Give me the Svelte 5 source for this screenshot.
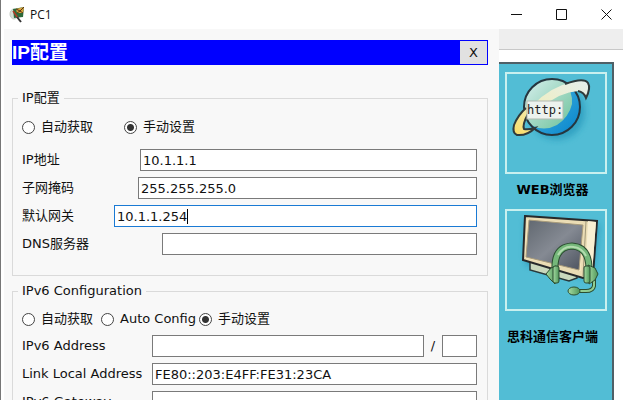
<script lang="ts">
  let ipMode = $state('static');
  let ipv6Mode = $state('static');

  let address = $state('10.1.1.1');
  let mask = $state('255.255.255.0');
  let gateway = $state('10.1.1.254');
  let dns = $state('');

  let v6Address = $state('');
  let v6Prefix = $state('');
  let linkLocal = $state('FE80::203:E4FF:FE31:23CA');
  let v6Gateway = $state('');

  // digits are one ch wide, dots are half of that
  const caret = $derived([...gateway].reduce((n, c) => n + (c === '.' ? 0.5 : 1), 0));
</script>

<div class="window">
  <header class="titlebar">
    <svg class="app-icon" width="18" height="18" viewBox="0 0 18 18" aria-hidden="true">
      <ellipse cx="5" cy="8" rx="4" ry="5" fill="#d5dcd3" stroke="#c3cac1" />
      <path d="M4 3 L15 1 L14 11 L5 12 Z" fill="#2c6a3b" />
      <path d="M7 3 L15 1 L14 7 L8 7 Z" fill="#d9a53c" />
      <path d="M7 3 L11 5 L15 1 M8 7 L11 5 L14 7" stroke="#5b3215" fill="none" />
      <path d="M4 5 L9 12" stroke="#b23a24" stroke-width="1.5" />
      <path d="M8 11 L12 16" stroke="#333" stroke-width="2" />
    </svg>
    <span class="title">PC1</span>
    <div class="controls">
      <button aria-label="Minimize">
        <svg width="11" height="11" viewBox="0 0 11 11"><path d="M0 5.5H11" /></svg>
      </button>
      <button aria-label="Maximize">
        <svg width="11" height="11" viewBox="0 0 11 11"><path d="M.5 .5H10.5V10.5H.5Z" /></svg>
      </button>
      <button aria-label="Close">
        <svg width="11" height="11" viewBox="0 0 11 11"><path d="M.5 .5L10.5 10.5M10.5 .5L.5 10.5" /></svg>
      </button>
    </div>
  </header>

  <div class="body">
    <main class="config">
      <div class="bar">
        <h1>IP配置</h1>
        <button>X</button>
      </div>

      <fieldset>
        <legend>IP配置</legend>
        <div class="modes">
          <label><input type="radio" value="dhcp" bind:group={ipMode} />自动获取</label>
          <label><input type="radio" value="static" bind:group={ipMode} />手动设置</label>
        </div>
        <div class="rows">
          <div class="row address">
            <label for="ip">IP地址</label>
            <input id="ip" type="text" bind:value={address} />
          </div>
          <div class="row mask">
            <label for="mask">子网掩码</label>
            <input id="mask" type="text" bind:value={mask} />
          </div>
          <div class="row gateway">
            <label for="gateway">默认网关</label>
            <div class="active">
              <input id="gateway" type="text" bind:value={gateway} />
              <span class="caret" style="left: calc(3px + {caret}ch)"></span>
            </div>
          </div>
          <div class="row dns">
            <label for="dns">DNS服务器</label>
            <input id="dns" type="text" bind:value={dns} />
          </div>
        </div>
      </fieldset>

      <fieldset class="v6">
        <legend>IPv6 Configuration</legend>
        <div class="modes">
          <label><input type="radio" value="dhcp" bind:group={ipv6Mode} />自动获取</label>
          <label><input type="radio" value="auto" bind:group={ipv6Mode} />Auto Config</label>
          <label><input type="radio" value="static" bind:group={ipv6Mode} />手动设置</label>
        </div>
        <div class="rows">
          <div class="row">
            <label for="v6">IPv6 Address</label>
            <input id="v6" type="text" bind:value={v6Address} />
            <span class="slash">/</span>
            <input class="prefix" type="text" aria-label="Prefix" bind:value={v6Prefix} />
          </div>
          <div class="row">
            <label for="link">Link Local Address</label>
            <input id="link" type="text" bind:value={linkLocal} />
          </div>
          <div class="row">
            <label for="v6gw">IPv6 Gateway</label>
            <input id="v6gw" type="text" bind:value={v6Gateway} />
          </div>
        </div>
      </fieldset>
    </main>

    <aside>
      <div class="toolbar"></div>
      <div class="desktop">
        <a class="app" href="#web">
          <svg viewBox="0 0 98 98" aria-hidden="true">
            <defs>
              <linearGradient id="sea" x1="0" y1="0" x2="1" y2="1">
                <stop offset="0" stop-color="#58bfe0" />
                <stop offset="1" stop-color="#0584cd" />
              </linearGradient>
              <linearGradient id="land" x1="0" y1="0" x2="1" y2="1">
                <stop offset="0" stop-color="#d8efee" />
                <stop offset="1" stop-color="#6cc29a" />
              </linearGradient>
              <linearGradient id="ring" x1="0" y1="1" x2="1" y2="0">
                <stop offset="0" stop-color="#fbdc62" />
                <stop offset=".45" stop-color="#eeeec4" />
                <stop offset="1" stop-color="#e6efed" />
              </linearGradient>
              <filter id="soft"><feGaussianBlur stdDeviation="3" /></filter>
            </defs>
            <circle cx="50" cy="38" r="28" fill="#1b8fb5" opacity=".6" filter="url(#soft)" />
            <circle cx="45" cy="33" r="28" fill="url(#sea)" />
            <path d="M45 5A28 28 0 0 0 24 51Q37 58 50 51Q62 43 65 30Q66 17 57 8Q51 5 45 5Z" fill="url(#land)" />
            <circle cx="45" cy="33" r="28" fill="none" stroke="#26363f" stroke-width="2" />
            <path
              d="M26 31Q43 13 65 8Q77 4 81 9Q84 14 79 24Q77 18 71 17Q53 18 34 34L20 44Q15 51 17 55Q21 56 28 54Q20 62 10 61Q5 59 7 51Q11 41 19 34Z"
              fill="url(#ring)"
            />
            <path
              d="M58 10Q77 3 81 9Q84 14 79 24Q77 18 71 17M21 40Q15 51 17 55Q21 56 28 54Q20 62 10 61Q5 59 7 51Q11 41 19 34"
              fill="none"
              stroke="#303b3c"
              stroke-width="2"
            />
            <rect x="20" y="27" width="36" height="18" fill="#edf2ee" stroke="#b1bab1" />
            <text x="20" y="40">http:</text>
          </svg>
          <span>WEB浏览器</span>
        </a>
        <a class="app" href="#communicator">
          <svg viewBox="0 0 98 98" aria-hidden="true">
            <defs>
              <linearGradient id="screen" x1="0" y1="0" x2="1" y2="1">
                <stop offset="0" stop-color="#60676f" />
                <stop offset=".5" stop-color="#858a93" />
                <stop offset="1" stop-color="#4b525e" />
              </linearGradient>
              <linearGradient id="green" x1="0" y1="0" x2="1" y2="0">
                <stop offset="0" stop-color="#a6dca2" />
                <stop offset="1" stop-color="#4f965a" />
              </linearGradient>
            </defs>
            <path d="M18 9L92 14L85 68L19 54Z" fill="#1b86ac" opacity=".65" filter="url(#soft)" />
            <path d="M23 50L23 59L62 70L70 67L70 62Z" fill="#c9d8bd" stroke="#29383a" stroke-width="1.5" />
            <path d="M18 5L90 10L86 64L76 67L16 49Z" fill="#eadcb4" stroke="#27292b" stroke-width="2" />
            <path d="M81 10L89 11L85 63L78 65Z" fill="#f8efd2" />
            <path d="M79 10L76 65" stroke="#a1987a" fill="none" />
            <path d="M20 8L76 13L74 60L18 47Z" fill="#f4e6bf" />
            <path d="M22 9L76 14L72 59L19 46Z" fill="url(#screen)" stroke="#a99c7b" />
            <path d="M48 59Q47 36 65 35Q82 36 82 58" fill="none" stroke="#2b4d30" stroke-width="7" />
            <path d="M48 59Q47 36 65 35Q82 36 82 58" fill="none" stroke="#75b77a" stroke-width="5" />
            <path d="M51 44Q57 34 67 36Q75 37 79 45" fill="none" stroke="#b3dcae" stroke-width="2" />
            <path d="M87 68L87 75Q86 80 79 80L70 80" fill="none" stroke="#2b4d30" stroke-width="4" />
            <path d="M87 68L87 75Q86 80 79 80L70 80" fill="none" stroke="#91cd91" stroke-width="2" />
            <ellipse cx="67" cy="80" rx="6" ry="4" fill="url(#green)" stroke="#2b4d30" />
            <path d="M49 55L44 57L39 63L43 68L48 73Z" fill="url(#green)" stroke="#2b4d30" />
            <rect x="46" y="55" width="6" height="17" rx="2" fill="url(#green)" stroke="#2b4d30" />
            <path d="M81 54L88 57L91 63L88 69L82 73Z" fill="url(#green)" stroke="#2b4d30" />
            <rect x="77" y="55" width="6" height="17" rx="2" fill="url(#green)" stroke="#2b4d30" />
          </svg>
          <span>思科通信客户端</span>
        </a>
      </div>
    </aside>
  </div>
</div>

<style>
  :global(body) {
    background: #fff;
    overflow: hidden;
  }

  .window {
    display: flex;
    flex-direction: column;
    height: 100vh;
    box-sizing: border-box;
    border-left: 1px solid #777;
    font: 13px/16px "DejaVu Sans", "Noto Sans CJK SC", sans-serif;
    color: #111;
  }

  button {
    padding: 0;
    border: 0;
    background: none;
    font: inherit;
    color: inherit;
  }

  .titlebar {
    display: flex;
    align-items: center;
    flex: none;
    height: 29px;
    padding-left: 8px;
  }

  .title {
    flex: 1;
    margin-left: 3px;
    font: 12px/16px "Open Sans", sans-serif;
  }

  .controls {
    display: flex;
    margin-right: -6px;
  }

  .controls button {
    display: grid;
    place-items: center;
    width: 45px;
    height: 29px;
  }

  .controls path {
    fill: none;
    stroke: #111;
  }

  .body {
    display: flex;
    flex: 1;
    min-height: 0;
  }

  .config {
    flex: 1;
    min-width: 0;
    margin-left: 3px;
    padding: 11px 11px 0 8px;
    background: #f8f8f8;
  }

  .bar {
    display: flex;
    height: 25px;
    box-sizing: border-box;
    padding: 1px 1px 1px 0;
    margin-bottom: 25px;
    background: #00f;
  }

  .bar h1 {
    flex: 1;
    margin: 0;
    color: #fff;
    font: bold 19px/23px "Liberation Sans", "Noto Sans CJK SC", sans-serif;
  }

  .bar button {
    width: 27px;
    background: #e1e1e1;
  }

  fieldset {
    min-width: 0;
    margin: 0 0 7px;
    padding: 13px 10px 20px 9px;
    border: 1px solid #dadada;
  }

  legend {
    margin-left: -4px;
    padding: 0 4px;
  }

  .modes {
    display: grid;
    grid-template-columns: 102px auto;
    margin-bottom: 14px;
  }

  .v6 {
    padding-top: 12px;
  }

  .v6 .modes {
    grid-template-columns: 79px 98px auto;
    margin-bottom: 8px;
  }

  .modes label {
    display: flex;
    align-items: center;
    gap: 6px;
    white-space: nowrap;
  }

  input[type='radio'] {
    appearance: none;
    flex: none;
    width: 13px;
    height: 13px;
    margin: 0;
    border: 1px solid #444;
    border-radius: 50%;
    background: #fff;
  }

  input[type='radio']:checked {
    background: radial-gradient(circle, #333 3px, #fff 4px);
  }

  .rows {
    display: grid;
    gap: 6px;
  }

  .row {
    display: flex;
    align-items: center;
  }

  .row label {
    flex: none;
    width: 130px;
    white-space: nowrap;
  }

  .address label {
    width: 118px;
  }

  .mask label {
    width: 116px;
  }

  .gateway label {
    width: 92px;
  }

  .dns label {
    width: 140px;
  }

  input[type='text'] {
    flex: 1;
    min-width: 0;
    width: 100%;
    height: 22px;
    box-sizing: border-box;
    padding: 0 2px;
    border: 1px solid #7a7a7a;
    background: #fff;
    color: #111;
    font: inherit;
    outline: 0;
  }

  .active {
    position: relative;
    display: flex;
    flex: 1;
  }

  .active input[type='text'] {
    border-color: #1a7ad4;
  }

  .caret {
    position: absolute;
    top: 4px;
    width: 1px;
    height: 15px;
    background: #000;
  }

  .slash {
    width: 18px;
    text-align: center;
  }

  .row input.prefix {
    flex: 0 0 35px;
  }

  aside {
    display: flex;
    flex-direction: column;
    width: 124px;
  }

  .toolbar {
    flex: none;
    height: 20px;
    margin-bottom: 12px;
    border-bottom: 1px solid #c8c8c8;
    background: #eee;
  }

  .desktop {
    flex: 1;
    width: 115px;
    box-sizing: border-box;
    padding: 8px 6px 0;
    border: solid #4f6067;
    border-width: 2px 2px 0 0;
    background: #52bdd5;
  }

  .app {
    display: block;
    color: #000;
    font-weight: bold;
    text-align: center;
    text-decoration: none;
    white-space: nowrap;
  }

  .app svg {
    display: block;
    width: 98px;
    height: 98px;
    border: 2px solid #c9f0ef;
  }

  .app span {
    display: block;
    padding: 8px 6px 11px 0;
  }

  .app:last-child span {
    padding-top: 18px;
  }

  .app text {
    fill: #222;
    font: 12px "DejaVu Sans Mono", monospace;
  }
</style>
